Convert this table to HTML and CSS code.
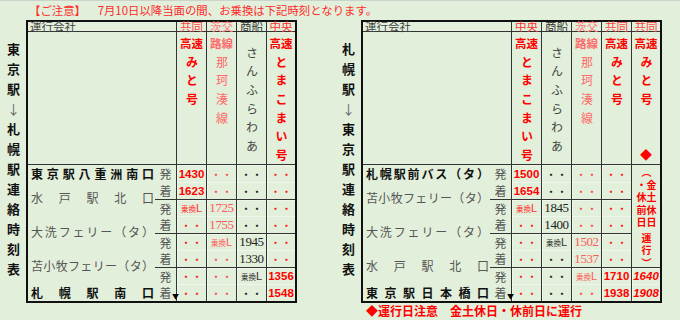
FILE: index.html
```html
<!DOCTYPE html>
<html lang="ja">
<head>
<meta charset="utf-8">
<title>連絡時刻表</title>
<link rel="stylesheet" href="styles.css">
</head>
<body>
<p class="notice"><span class="tag">【ご注意】</span>　7月10日以降当面の間、お乗換は下記時刻となります。</p>
<div class="boards">
  <section class="board">
    <h2 class="title">東京駅<span class="arr">↓</span>札幌駅連絡時刻表</h2>
    <div class="stack">
      <div class="tt tt4">
        <div class="hd co">運行会社</div>
        <div class="hd c kyo">共同</div>
        <div class="hd c iba">茨交</div>
        <div class="hd c sho">商船</div>
        <div class="hd c chu">中央</div>
        <div class="sv blank"></div>
        <div class="sv c red"><span class="sh">高速</span><span class="sv-v">みと号</span></div>
        <div class="sv c ib"><span class="sh">路線</span><span class="sv-v">那珂湊線</span></div>
        <div class="sv c sf"><span class="sv-v first">さんふらわあ</span></div>
        <div class="sv c red"><span class="sh">高速</span><span class="sv-v">とまこまい号</span></div>

        <div class="nm b n1">東京駅八重洲南口</div>
        <div class="nm n2">水戸駅北口</div>
        <div class="nm n3">大洗フェリー（タ）</div>
        <div class="nm n4">苫小牧フェリー（タ）</div>
        <div class="nm b n5">札幌駅南口</div>

        <div class="hk">発</div>
        <div class="t r">1430</div><div class="t d ds">・・</div><div class="t d dk">・・</div><div class="t d dr">・・</div>
        <div class="hk">着</div>
        <div class="t r">1623</div><div class="t d ds">・・</div><div class="t d dk">・・</div><div class="t d dr">・・</div>
        <div class="hk g">発</div>
        <div class="t g x xr"><span>乗換</span>L</div><div class="t g s">1725</div><div class="t g d dk">・・</div><div class="t g d dr">・・</div>
        <div class="hk">着</div>
        <div class="t d dr">・・</div><div class="t s">1755</div><div class="t d dk">・・</div><div class="t d dr">・・</div>
        <div class="hk g">発</div>
        <div class="t g d dr">・・</div><div class="t g x xs"><span>乗換</span>L</div><div class="t g k">1945</div><div class="t g d dr">・・</div>
        <div class="hk">着</div>
        <div class="t d dr">・・</div><div class="t d ds">・・</div><div class="t k">1330</div><div class="t d dr">・・</div>
        <div class="hk g">発</div>
        <div class="t g d dr">・・</div><div class="t g d ds">・・</div><div class="t g x xk"><span>乗換</span>L</div><div class="t g r">1356</div>
        <div class="hk end">着</div>
        <div class="t d dr">・・</div><div class="t d ds">・・</div><div class="t d dk">・・</div><div class="t r">1548</div>
      </div>
    </div>
  </section>

  <section class="board">
    <h2 class="title">札幌駅<span class="arr">↓</span>東京駅連絡時刻表</h2>
    <div class="stack">
      <div class="tt tt5">
        <div class="hd co">運行会社</div>
        <div class="hd c chu">中央</div>
        <div class="hd c sho">商船</div>
        <div class="hd c iba">茨交</div>
        <div class="hd c kyo">共同</div>
        <div class="hd c kyo">共同</div>
        <div class="sv blank"></div>
        <div class="sv c red"><span class="sh">高速</span><span class="sv-v">とまこまい号</span></div>
        <div class="sv c sf"><span class="sv-v first">さんふらわあ</span></div>
        <div class="sv c ib"><span class="sh">路線</span><span class="sv-v">那珂湊線</span></div>
        <div class="sv c red"><span class="sh">高速</span><span class="sv-v">みと号</span></div>
        <div class="sv c red"><span class="sh">高速</span><span class="sv-v">みと号</span><span class="dia">◆</span></div>

        <div class="nm b n1">札幌駅前バス（タ）</div>
        <div class="nm n2">苫小牧フェリー（タ）</div>
        <div class="nm n3">大洗フェリー（タ）</div>
        <div class="nm n4">水戸駅北口</div>
        <div class="nm b n5">東京駅日本橋口</div>

        <div class="note">
          <span class="nv">（</span>
          <span class="nv">金土休日<br>・休前日</span>
          <span class="nv note-end">運行）</span>
        </div>

        <div class="hk">発</div>
        <div class="t r">1500</div><div class="t d dk">・・</div><div class="t d ds">・・</div><div class="t d dr">・・</div>
        <div class="hk">着</div>
        <div class="t r">1654</div><div class="t d dk">・・</div><div class="t d ds">・・</div><div class="t d dr">・・</div>
        <div class="hk g">発</div>
        <div class="t g x xr"><span>乗換</span>L</div><div class="t g k">1845</div><div class="t g d ds">・・</div><div class="t g d dr">・・</div>
        <div class="hk">着</div>
        <div class="t d dr">・・</div><div class="t k">1400</div><div class="t d ds">・・</div><div class="t d dr">・・</div>
        <div class="hk g">発</div>
        <div class="t g d dr">・・</div><div class="t g x xk"><span>乗換</span>L</div><div class="t g s">1502</div><div class="t g d dr">・・</div>
        <div class="hk">着</div>
        <div class="t d dr">・・</div><div class="t d dk">・・</div><div class="t s">1537</div><div class="t d dr">・・</div>
        <div class="hk g">発</div>
        <div class="t g d dr">・・</div><div class="t g d dk">・・</div><div class="t g x xs"><span>乗換</span>L</div><div class="t g r">1710</div><div class="t g ri">1640</div>
        <div class="hk end">着</div>
        <div class="t d dr">・・</div><div class="t d dk">・・</div><div class="t d ds">・・</div><div class="t r">1938</div><div class="t ri">1908</div>
      </div>
      <p class="foot">◆運行日注意　金土休日・休前日に運行</p>
    </div>
  </section>
</div>
</body>
</html>
```

FILE: styles.css
```css
* { box-sizing: border-box; }

body {
  margin: 0;
  width: 680px;
  height: 320px;
  overflow: hidden;
  background: #e2efda;
  border-top: 1px solid #cdd2cb;
  font-family: "Noto Sans CJK JP", "Noto Sans", sans-serif;
  color: #222;
}

.notice {
  margin: 0;
  height: 19px;
  line-height: 19px;
  padding-left: 29px;
  font-size: 11.4px;
  color: #ff2a2a;
  white-space: nowrap;
}
.tag { margin-right: 6px; }

.boards {
  display: flex;
  gap: 38px;
  align-items: flex-start;
}

.board {
  display: flex;
  align-items: flex-start;
}

.title {
  margin: 0;
  width: 26px;
  padding-top: 23px;
  writing-mode: vertical-rl;
  text-orientation: upright;
  font-size: 13px;
  line-height: 26px;
  letter-spacing: 7px;
  font-weight: 700;
  color: #111;
  white-space: nowrap;
}
.title .arr {
  font-weight: 400;
  color: #666;
}

.stack {
  display: flex;
  flex-direction: column;
}

.tt {
  display: grid;
  border: 2px solid #111;
  grid-template-rows: 10px 133px repeat(8, 17px);
}
.tt4 { grid-template-columns: 127px 21px 30px 30px 30px 29px; }
.tt5 { grid-template-columns: 127px 21px 30px 30px 30px 30px 29px; }

.c { border-left: 1px solid #333; }

/* header row */
.hd {
  border-bottom: 1px solid #333;
  font-size: 11.5px;
  line-height: 9px;
  text-align: center;
  white-space: nowrap;
}
.hd.co {
  grid-column: span 2;
  text-align: left;
  padding-left: 2px;
  color: #444;
}
.kyo { color: #ff4646; }
.iba { color: #ff7c7c; }
.sho { color: #333; }
.chu { color: #ff3030; }

/* service names */
.sv {
  border-bottom: 1px solid #333;
  display: flex;
  flex-direction: column;
  align-items: center;
  padding: 5px 0 3px;
  min-height: 0;
}
.sv.blank { grid-column: span 2; }
.sh {
  display: block;
  flex-shrink: 0;
  font-size: 11.5px;
  line-height: 12px;
  font-weight: 700;
  white-space: nowrap;
}
.sv-v {
  flex-shrink: 0;
  writing-mode: vertical-rl;
  text-orientation: upright;
  white-space: nowrap;
  font-size: 12px;
  line-height: 14px;
  letter-spacing: 6.7px;
  margin-top: 7px;
}
.sv-v.first { margin-top: 10px; }
.sv.red { color: #ff0000; }
.sv.red .sv-v { font-weight: 700; }
.sv.ib { color: #ff6a6a; }
.sv.sf { color: #444; }
.dia {
  margin-top: auto;
  flex-shrink: 0;
  font-size: 12px;
  line-height: 12px;
  color: #ff0000;
}

/* station names */
.nm {
  grid-column: 1;
  display: flex;
  flex-direction: column;
  justify-content: center;
  padding: 0 1px 0 3px;
  font-size: 12px;
  line-height: 14px;
  color: #555;
  white-space: nowrap;
  text-align: justify;
  text-align-last: justify;
}
.nm.b { font-weight: 700; color: #111; }
.n1 { grid-row: 3; }
.n2 { grid-row: 4 / span 2; padding-bottom: 3px; }
.n3 { grid-row: 6 / span 2; padding-bottom: 3px; }
.n4 { grid-row: 8 / span 2; padding-bottom: 3px; }
.n5 { grid-row: 10; }

/* departure / arrival markers */
.hk {
  display: flex;
  align-items: center;
  justify-content: center;
  font-size: 12px;
  color: #555;
  position: relative;
}
.hk.end::after {
  content: "▼";
  position: absolute;
  right: -3px;
  bottom: 1px;
  font-size: 7px;
  line-height: 7px;
  color: #000;
}

/* time cells */
.t {
  border-left: 1px solid #333;
  display: flex;
  align-items: center;
  justify-content: center;
  white-space: nowrap;
  box-shadow: inset 1px 1px 0 rgba(255, 255, 255, 0.45);
}
.g { border-top: 1px solid #333; }

.r {
  color: #ff0000;
  font: 700 11.5px "Liberation Sans", Arial, sans-serif;
}
.ri {
  color: #ff0000;
  font: italic 700 11.5px "Liberation Sans", Arial, sans-serif;
}
.s, .k {
  font: 400 13px "Liberation Serif", serif;
  letter-spacing: -0.4px;
}
.s { color: #ff5a5a; }
.k { color: #222; }

.d { font-size: 11px; }
.dr { color: #ff1a1a; }
.ds { color: #ff4a4a; }
.dk { color: #222; }

.x {
  font: 400 11px "Liberation Sans", Arial, sans-serif;
}
.x span {
  font-family: "Noto Sans CJK JP", sans-serif;
  font-size: 7.5px;
}
.xr { color: #ff3030; }
.xs { color: #ff5a5a; }
.xk { color: #333; }

/* note column (right board) */
.note {
  grid-column: 7;
  grid-row: 3 / span 6;
  border-left: 1px solid #333;
  display: flex;
  flex-direction: column;
  align-items: center;
  padding-top: 2px;
  color: #ff0000;
  font-weight: 700;
  font-size: 10px;
  min-height: 0;
}
.nv {
  flex-shrink: 0;
  writing-mode: vertical-rl;
  white-space: nowrap;
  letter-spacing: 2.5px;
  line-height: 10px;
}
.note-end { margin-top: 3px; }

.foot {
  margin: 1px 0 0 5px;
  color: #ff0000;
  font-weight: 700;
  font-size: 12px;
  line-height: 14px;
  white-space: nowrap;
}
```
